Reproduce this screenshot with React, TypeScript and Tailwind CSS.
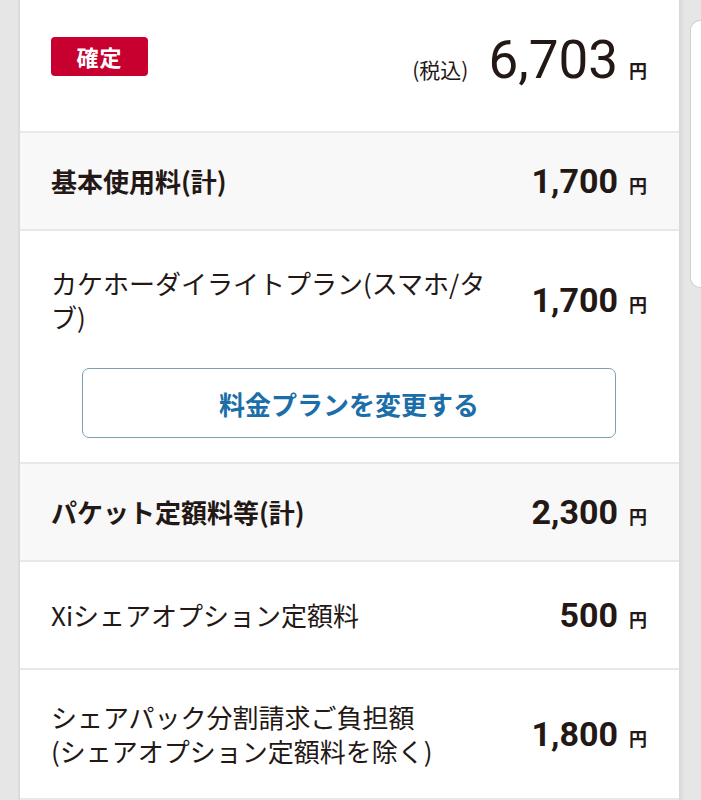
import type { ReactNode } from "react";

const jp = "font-['Noto_Sans_CJK_JP',sans-serif]";
const num = "font-['Roboto','Noto_Sans_CJK_JP',sans-serif]";

type Row = {
  label: ReactNode;
  amount: string;
  header?: boolean;
  tight?: boolean;
};

const Amount = ({ value, big }: { value: string; big?: boolean }) => (
  <div className="flex shrink-0 items-baseline">
    <span
      className={`${num} ${big ? "text-[53px] font-normal leading-[52px]" : "text-[34px] font-bold leading-[40px]"} text-[#231815]`}
    >
      {value}
    </span>
    <span className={`${jp} ml-[11px] text-[18px] font-bold leading-none text-[#231815]`}>円</span>
  </div>
);

const LineRow = ({ row }: { row: Row }) => (
  <div
    className={`flex items-center justify-between border-b-2 border-[#e8e8e8] pl-[31px] pr-[32px] ${row.header ? "h-[98px] bg-[#f8f8f8]" : row.tight ? "py-[30px]" : "py-[33px]"}`}
  >
    <p
      className={`${jp} w-[445px] text-[26px] leading-[34px] text-[#231815] ${row.header ? "font-bold" : "font-normal"}`}
    >
      {row.label}
    </p>
    <Amount value={row.amount} />
  </div>
);

export default function App() {
  return (
    <div className="flex min-h-[800px] w-[701px] overflow-hidden bg-[#e6e6e6]">
      <div className="w-[20px] shrink-0 border-r-2 border-[#dcdcdc]" />

      <div className="w-[659px] shrink-0 bg-white">
        <div className="flex h-[133px] items-start justify-between border-b-2 border-[#e8e8e8] pl-[31px] pr-[32px] pt-[37px]">
          <span
            className={`${jp} flex h-[39px] w-[97px] items-center justify-center rounded-[4px] bg-[#c8002f] text-[22px] font-bold tracking-[1px] text-white`}
          >
            確定
          </span>
          <div className="mt-[-3px] flex items-baseline">
            <span className={`${jp} mr-[20px] text-[21px] text-[#231815]`}>(税込)</span>
            <Amount value="6,703" big />
          </div>
        </div>

        <LineRow row={{ label: "基本使用料(計)", amount: "1,700", header: true }} />

        <div className="border-b-2 border-[#e8e8e8] pl-[31px] pr-[32px] pt-[35px] pb-[24px]">
          <div className="flex items-center justify-between">
            <p className={`${jp} w-[445px] text-[26px] leading-[34px] text-[#231815]`}>
              カケホーダイライトプラン(スマホ/タブ)
            </p>
            <Amount value="1,700" />
          </div>
          <div className="mt-[34px] px-[31px]">
            <button
              className={`${jp} flex h-[70px] w-full items-center justify-center rounded-[7px] border border-[#7e9fb2] bg-white text-[26px] font-bold text-[#1b6ea8]`}
            >
              料金プランを変更する
            </button>
          </div>
        </div>

        <LineRow row={{ label: "パケット定額料等(計)", amount: "2,300", header: true }} />
        <LineRow row={{ label: "Xiシェアオプション定額料", amount: "500" }} />
        <LineRow
          row={{
            label: (
              <>
                シェアパック分割請求ご負担額
                <br />
                (シェアオプション定額料を除く)
              </>
            ),
            amount: "1,800",
            tight: true,
          }}
        />
      </div>

      <div className="flex-1 bg-gradient-to-r from-[#d8d8d8] to-[#e6e6e6] to-[6px] pl-[11px] pt-[20px]">
        <div className="h-[268px] rounded-l-[10px] border-y border-l border-[#cfcfcf] bg-white" />
      </div>
    </div>
  );
}
